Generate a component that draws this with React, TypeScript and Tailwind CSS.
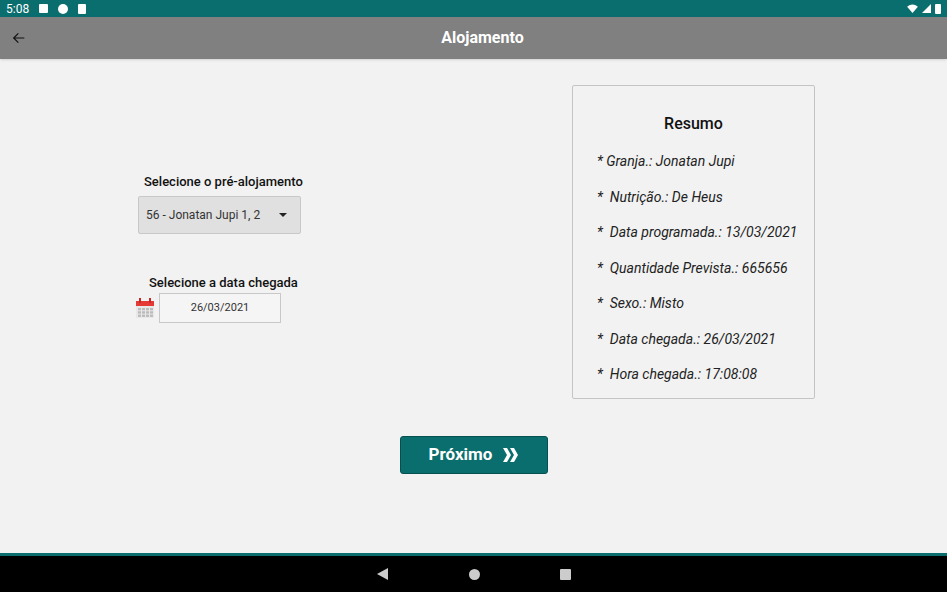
import React from "react";

const resumo = [
  "* Granja.: Jonatan Jupi",
  "*  Nutrição.: De Heus",
  "*  Data programada.: 13/03/2021",
  "*  Quantidade Prevista.: 665656",
  "*  Sexo.: Misto",
  "*  Data chegada.: 26/03/2021",
  "*  Hora chegada.: 17:08:08",
];

const App = () => {
  return (
    <div className="w-[947px] h-[592px] flex flex-col bg-[#f2f2f2] overflow-hidden" style={{ fontFamily: "Roboto, sans-serif" }}>
      <div className="h-[17px] bg-[#0b6e6e] flex items-center px-[6px] gap-[10px] text-white text-[12px]">
        <span>5:08</span>
        <span className="w-[9px] h-[9px] bg-white rounded-[1px]" />
        <span className="w-[10px] h-[10px] bg-white rounded-full" />
        <span className="w-[8px] h-[10px] bg-white rounded-[1px]" />
        <div className="ml-auto flex items-center gap-[4px]">
          <svg width="11" height="9" viewBox="0 0 12 10"><path d="M0 3 Q6 -2 12 3 L6 10 Z" fill="#fff" /></svg>
          <svg width="9" height="9" viewBox="0 0 10 10"><path d="M0 10 L10 0 V10 Z" fill="#fff" /></svg>
          <span className="w-[6px] h-[10px] bg-white rounded-[1px]" />
        </div>
      </div>
      <div className="h-[42px] bg-[#808080] flex items-center relative shadow-sm">
        <svg className="ml-[11px]" width="16" height="16" viewBox="0 0 24 24" fill="none" stroke="#111" strokeWidth="1.8"><path d="M20 12H4M11 5l-7 7 7 7" /></svg>
        <div className="absolute inset-0 flex items-center justify-center text-white font-bold text-[16px] pl-[18px]">Alojamento</div>
      </div>
      <div className="flex-1 flex flex-col">
        <div className="flex pt-[26px]">
          <div className="w-[572px] pl-[136px] pt-[87px]">
            <div className="pl-[8px] text-[13px] font-medium text-[#111]">Selecione o pré-alojamento</div>
            <div className="ml-[2px] mt-[4px] w-[163px] h-[38px] bg-[#e0e0e0] border border-[#c8c8c8] rounded-[2px] flex items-center px-[7px] text-[12px] text-[#333]">
              <span>56 - Jonatan Jupi 1, 2</span>
              <span className="ml-auto mr-[6px] w-0 h-0 border-l-[4px] border-r-[4px] border-t-[4px] border-l-transparent border-r-transparent border-t-[#222]" />
            </div>
            <div className="pl-[13px] mt-[39px] text-[13px] font-medium text-[#111]">Selecione a data chegada</div>
            <div className="flex items-center gap-[5px] mt-[1px]">
              <svg width="18" height="20" viewBox="0 0 18 20">
                <rect x="0" y="3" width="18" height="17" fill="#e8e8e8" />
                <rect x="0" y="3" width="18" height="5" fill="#e53935" />
                <rect x="3" y="0" width="2" height="5" fill="#c62828" />
                <rect x="13" y="0" width="2" height="5" fill="#c62828" />
                {[0, 1, 2].map((r) => [0, 1, 2, 3].map((c) => (
                  <rect key={`${r}${c}`} x={2 + c * 4} y={10 + r * 3.3} width="3" height="2.3" fill="#bbb" />
                )))}
              </svg>
              <div className="w-[122px] h-[30px] bg-[#f5f5f5] border border-[#c8c8c8] flex items-center justify-center text-[11px] text-[#333]">26/03/2021</div>
            </div>
          </div>
          <div className="w-[243px] h-[314px] border border-[#c4c4c4] rounded-[2px] bg-[#f2f2f2] pl-[24px] pt-[26px]">
            <div className="text-[16px] font-medium text-[#111] text-center pr-[24px] mb-[15px]">Resumo</div>
            <div className="flex flex-col gap-[14.5px]">
              {resumo.map((r) => (
                <div key={r} className="italic text-[14px] text-[#222] leading-[21px] whitespace-pre">{r}</div>
              ))}
            </div>
          </div>
        </div>
        <div className="flex justify-center mt-[37px]">
          <button className="w-[148px] h-[38px] bg-[#0b6e6e] border border-[#075050] rounded-[3px] text-white font-bold text-[17px] flex items-center justify-center gap-[10px]">
            Próximo
            <svg width="16" height="16" viewBox="0 0 16 16" fill="#fff"><path d="M1 1h4l4 7-4 7H1l4-7zM8 1h4l4 7-4 7H8l4-7z" /></svg>
          </button>
        </div>
      </div>
      <div className="h-[3px] bg-[#0b6e6e]" />
      <div className="h-[36px] bg-black flex items-center justify-center gap-[80px]">
        <svg width="12" height="12" viewBox="0 0 12 12"><path d="M11 0v12L0 6z" fill="#ccc" /></svg>
        <span className="w-[11px] h-[11px] rounded-full bg-[#ccc]" />
        <span className="w-[11px] h-[11px] rounded-[1px] bg-[#ccc]" />
      </div>
    </div>
  );
};

export default App;
